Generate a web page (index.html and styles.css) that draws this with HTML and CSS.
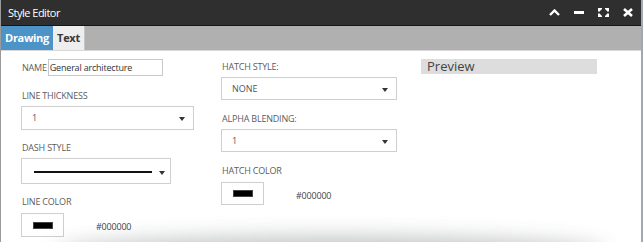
FILE: index.html
```html
<!DOCTYPE html>
<html lang="en">
<head>
  <meta charset="UTF-8" />
  <title>Style Editor</title>
  <link rel="stylesheet" href="styles.css">
</head>
<body>

  <div class="dialog">
    <div class="titlebar">
      <span class="title">Style Editor</span>
      <div class="actions">
        <svg width="11" height="7" viewBox="0 0 11 7"><path d="M1 6 L5.5 1.5 L10 6" fill="none" stroke="#fff" stroke-width="2.4"/></svg>
        <svg width="10" height="3" viewBox="0 0 10 3"><rect x="0" y="0" width="10" height="3" fill="#fff"/></svg>
        <svg width="11" height="9" viewBox="0 0 11 9">
          <path d="M0 0h4v1.5h-1v1h-1v1h-2z M11 0h-4v1.5h1v1h1v1h2z M0 9h4v-1.5h-1v-1h-1v-1h-2z M11 9h-4v-1.5h1v-1h1v-1h2z" fill="#fff"/>
        </svg>
        <svg width="10" height="9" viewBox="0 0 10 9"><path d="M1 1 L9 8 M9 1 L1 8" stroke="#fff" stroke-width="2.6"/></svg>
      </div>
    </div>

    <div class="tabs">
      <div class="tab active">Drawing</div>
      <div class="tab">Text</div>
    </div>

    <div class="content">
      <div class="col">
        <div class="name-row">
          <label>NAME</label>
          <div class="text-input">General architecture</div>
        </div>
        <label class="field-label">LINE THICKNESS</label>
        <div class="dropdown wide">1</div>
        <label class="field-label">DASH STYLE</label>
        <div class="dropdown dash"><span class="dash-line"></span></div>
        <label class="field-label">LINE COLOR</label>
        <div class="color-row">
          <div class="swatch"><span></span></div>
          <span class="hex">#000000</span>
        </div>
      </div>

      <div class="col col2">
        <label class="field-label">HATCH STYLE:</label>
        <div class="dropdown short">NONE</div>
        <label class="field-label">ALPHA BLENDING:</label>
        <div class="dropdown short">1</div>
        <label class="field-label">HATCH COLOR</label>
        <div class="color-row">
          <div class="swatch small"><span></span></div>
          <span class="hex">#000000</span>
        </div>
      </div>

      <div class="col">
        <div class="preview">Preview</div>
      </div>
    </div>

    <div class="fade"></div>
  </div>

</body>
</html>
```

FILE: styles.css
```css
body {
  margin: 0;
  background-color: #9eaab5;
  font-family: 'Open Sans', sans-serif;
}

.dialog {
  position: relative;
  width: 640px;
  height: 242px;
  background-color: #fff;
  border-left: 1px solid #9a9a9a;
  overflow: hidden;
}

.titlebar {
  height: 25px;
  background-color: #2f2f2f;
  border-bottom: 1px solid #151515;
  display: flex;
  align-items: center;
  justify-content: space-between;
  padding: 0 7px;
}

.title {
  color: #fff;
  font-size: 11px;
  letter-spacing: -0.5px;
}

.actions {
  display: flex;
  align-items: center;
  gap: 14px;
  padding-right: 1px;
}

.actions svg {
  display: block;
}

.tabs {
  height: 24px;
  background-color: #b0b0b0;
  border-bottom: 1px solid #d8d8d8;
  display: flex;
}

.tab {
  width: 32px;
  box-sizing: border-box;
  text-align: center;
  font-size: 11px;
  font-weight: bold;
  letter-spacing: -0.3px;
  line-height: 24px;
  color: #3a3a3a;
  background-color: #eeeeee;
  border-right: 1px solid #c4c4c4;
}

.tab.active {
  width: 52px;
  background-color: #4c94c8;
  color: #fff;
  border-right: none;
}

.content {
  display: flex;
  padding: 8px 0 0 20px;
}

.col {
  width: 200px;
  display: flex;
  flex-direction: column;
  align-items: flex-start;
}

.col2 {
  padding-top: 1px;
}

label {
  font-size: 9px;
  color: #5c5c5c;
  letter-spacing: -0.2px;
}

.name-row {
  display: flex;
  align-items: center;
  height: 17px;
  margin-bottom: 13px;
}

.name-row label {
  margin: 0 1px 0 1px;
}

.text-input {
  width: 112px;
  height: 15px;
  border: 1px solid #c8c8c8;
  font-size: 9px;
  line-height: 15px;
  color: #333;
  padding-left: 1px;
  letter-spacing: -0.2px;
}

.field-label {
  display: block;
  line-height: 14px;
  margin: 0 0 3px 1px;
}

.dropdown {
  position: relative;
  box-sizing: border-box;
  border: 1px solid #cfcfcf;
  font-size: 9px;
  color: #555;
  padding-left: 10px;
  margin-bottom: 11px;
}

.dropdown::after {
  content: '';
  position: absolute;
  right: 8px;
  top: 50%;
  margin-top: -1px;
  border-left: 3px solid transparent;
  border-right: 3px solid transparent;
  border-top: 4px solid #333;
}

.dropdown.wide {
  width: 173px;
  height: 24px;
  line-height: 22px;
}

.dropdown.short {
  width: 176px;
  height: 23px;
  line-height: 21px;
  margin-bottom: 12px;
}

.dropdown.dash {
  width: 150px;
  height: 26px;
}

.dropdown.dash::after {
  right: 5px;
  margin-top: 0;
}

.dash-line {
  position: absolute;
  left: 12px;
  right: 18px;
  top: 12px;
  height: 2px;
  background-color: #111;
}

.color-row {
  display: flex;
  align-items: center;
  margin-top: 1px;
}

.swatch {
  box-sizing: border-box;
  width: 43px;
  height: 24px;
  border: 1px solid #cfcfcf;
  display: flex;
  align-items: center;
  justify-content: center;
}

.swatch.small {
  height: 23px;
}

.swatch span {
  width: 18px;
  height: 5px;
  background-color: #000;
  border: 1px solid #444;
}

.hex {
  font-size: 9px;
  color: #444;
  margin-left: 32px;
  padding-top: 3px;
  letter-spacing: -0.2px;
}

.preview {
  box-sizing: border-box;
  width: 176px;
  height: 15px;
  background-color: #dddddd;
  color: #444;
  font-size: 13px;
  line-height: 15px;
  padding-left: 6px;
}

.fade {
  position: absolute;
  left: 60px;
  right: 40px;
  bottom: -22px;
  height: 20px;
  border-radius: 50%;
  box-shadow: 0 -2px 20px 6px rgba(60, 65, 70, 0.3);
  pointer-events: none;
}
```
